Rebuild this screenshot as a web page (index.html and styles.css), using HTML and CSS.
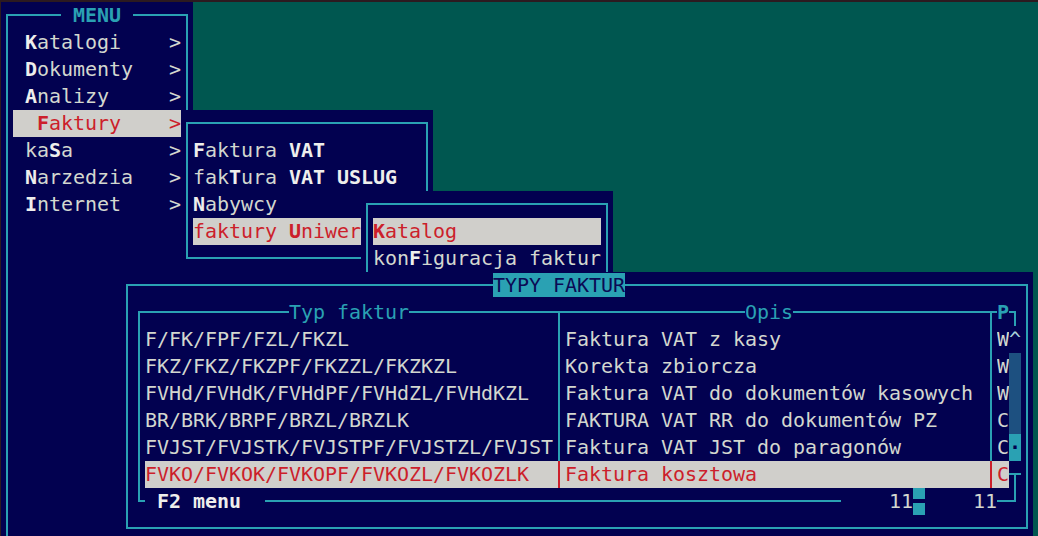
FILE: index.html
```html
<!DOCTYPE html>
<html lang="pl">
<head>
    <meta charset="UTF-8">
    <meta name="viewport" content="width=device-width, initial-scale=1.0">
    <title>Typy faktur</title>
    <link rel="stylesheet" href="styles.css">
</head>
<body>

    <div class="screen">

        <!-- Main menu -->
        <div class="win menu">
            <div class="frame"></div>
            <div class="row caption"><span class="mask title"> MENU </span></div>
            <div class="row item"><span><b>K</b>atalogi</span><span>&gt;</span></div>
            <div class="row item"><span><b>D</b>okumenty</span><span>&gt;</span></div>
            <div class="row item"><span><b>A</b>nalizy</span><span>&gt;</span></div>
            <div class="row item sel"><span><b>F</b>aktury</span><span>&gt;</span></div>
            <div class="row item"><span>ka<b>S</b>a</span><span>&gt;</span></div>
            <div class="row item"><span><b>N</b>arzedzia</span><span>&gt;</span></div>
            <div class="row item"><span><b>I</b>nternet</span><span>&gt;</span></div>
        </div>

        <!-- Faktury submenu -->
        <div class="win sub">
            <div class="frame"></div>
            <div class="row"></div>
            <div class="row item"><b>F</b>aktura <b>VAT</b></div>
            <div class="row item">fak<b>T</b>ura <b>VAT USLUG</b></div>
            <div class="row item"><b>N</b>abywcy</div>
            <div class="row item sel">faktury <b>U</b>niwer</div>
        </div>

        <!-- faktury Uniwersalne submenu -->
        <div class="win cat">
            <div class="frame"></div>
            <div class="row"></div>
            <div class="row item sel"><b>K</b>atalog</div>
            <div class="row item">kon<b>F</b>iguracja faktur</div>
        </div>

        <!-- TYPY FAKTUR window -->
        <div class="win types">
            <div class="frame"></div>
            <div class="frame inner"></div>
            <div class="row caption wide"><span class="badge">TYPY FAKTUR</span></div>

            <div class="row grid head">
                <span class="hcell first"><span class="mask">Typ faktur</span></span>
                <span class="sep top"></span>
                <span class="hcell second"><span class="mask">Opis</span></span>
                <span class="sep top"></span>
                <span class="mask strong">P</span>
                <span></span>
            </div>

            <div class="row grid">
                <span>F/FK/FPF/FZL/FKZL</span><span class="sep"></span>
                <span>Faktura VAT z kasy</span><span class="sep"></span>
                <span>W</span><span class="arrow">^</span>
            </div>
            <div class="row grid">
                <span>FKZ/FKZ/FKZPF/FKZZL/FKZKZL</span><span class="sep"></span>
                <span>Korekta zbiorcza</span><span class="sep"></span>
                <span>W</span><span class="track"></span>
            </div>
            <div class="row grid">
                <span>FVHd/FVHdK/FVHdPF/FVHdZL/FVHdKZL</span><span class="sep"></span>
                <span>Faktura VAT do dokumentów kasowych</span><span class="sep"></span>
                <span>W</span><span class="track"></span>
            </div>
            <div class="row grid">
                <span>BR/BRK/BRPF/BRZL/BRZLK</span><span class="sep"></span>
                <span>FAKTURA VAT RR do dokumentów PZ</span><span class="sep"></span>
                <span>C</span><span class="track"></span>
            </div>
            <div class="row grid">
                <span>FVJST/FVJSTK/FVJSTPF/FVJSTZL/FVJST</span><span class="sep"></span>
                <span>Faktura VAT JST do paragonów</span><span class="sep"></span>
                <span>C</span><span class="thumb">·</span>
            </div>
            <div class="row grid sel">
                <span>FVKO/FVKOK/FVKOPF/FVKOZL/FVKOZLK</span><span class="sep"></span>
                <span>Faktura kosztowa</span><span class="sep"></span>
                <span>C</span><span class="tee"></span>
            </div>

            <div class="row status">
                <span class="mask keys"> <b>F2 menu</b>  </span>
                <span class="line"></span>
                <span class="mask counts">    11<span class="knob"></span>    11</span>
            </div>
        </div>

    </div>

</body>
</html>
```

FILE: styles.css
```css
/* Terminal screen */
body {
    margin: 0;
    padding: 2px 0 0 1px;
    background: #2c1a20;
    font-family: "DejaVu Sans Mono", monospace;
    font-size: 20px;
    letter-spacing: -0.04px;
    color: #d3d7cf;
    overflow: hidden;
}

.screen {
    position: relative;
    width: 1037px;
    height: 534px;
    overflow: hidden;
    background: #005750;
}

b {
    font-weight: bold;
    color: #eeeeec;
}

/* Windows */
.win {
    position: absolute;
    background: #020150;
}

.menu  { left: 0;     top: 0;     width: 192px; height: 567px; }
.sub   { left: 180px; top: 108px; width: 252px; height: 162px; }
.cat   { left: 360px; top: 189px; width: 252px; height: 108px; }
.types { left: 120px; top: 270px; width: 912px; height: 270px; }

.frame {
    position: absolute;
    left: 5px;
    right: 5px;
    top: 12px;
    bottom: 13px;
    border: 2px solid #2aa1b3;
}

.types .inner {
    left: 17px;
    right: 17px;
    top: 39px;
    bottom: 40px;
}

/* Text rows, one terminal line each */
.row {
    position: relative;
    height: 27px;
    line-height: 27px;
    white-space: pre;
}

.mask {
    background: #020150;
}

.caption {
    padding-left: 60px;
}

.caption.wide {
    padding-left: 372px;
}

.title {
    color: #2aa1b3;
    font-weight: bold;
}

.badge {
    background: #2aa1b3;
    color: #0b0a55;
}

/* Menu items */
.item {
    margin: 0 12px;
}

.menu .item {
    display: flex;
    justify-content: space-between;
    padding-left: 12px;
}

.menu .item.sel {
    padding-left: 24px;
}

.item.sel {
    background: #d0cfcb;
    color: #cc1f2b;
}

.item.sel b {
    color: #cc1f2b;
}

/* Table */
.grid {
    display: grid;
    grid-template-columns: 408px 12px 420px 12px 12px 12px;
    margin-left: 24px;
}

.grid > span {
    overflow: hidden;
}

.sep {
    background: linear-gradient(#2aa1b3, #2aa1b3) 5px 0 / 2px 100% no-repeat;
}

.sep.top {
    background: linear-gradient(#2aa1b3, #2aa1b3) 5px 12px / 2px 15px no-repeat;
}

.head {
    color: #2aa1b3;
}

.hcell.first {
    padding-left: 144px;
}

.hcell.second {
    padding-left: 180px;
}

.strong {
    font-weight: bold;
}

.grid.sel > span:not(:last-child) {
    background-color: #d0cfcb;
    color: #cc1f2b;
}

.grid.sel > .sep {
    background-image: linear-gradient(#cc1f2b, #cc1f2b);
    background-position: 5px 0;
    background-size: 2px 100%;
    background-repeat: no-repeat;
}

/* Scrollbar */
.arrow {
    background: #020150;
    color: #a9d4dc;
}

.track {
    background: #1d5080;
}

.thumb {
    background: #2aa1b3;
    color: #020150;
    font-weight: bold;
    text-align: center;
}

.tee {
    background:
        linear-gradient(#2aa1b3, #2aa1b3) 0 12px / 100% 2px no-repeat,
        linear-gradient(#2aa1b3, #2aa1b3) 5px 12px / 2px 15px no-repeat,
        #020150;
}

/* Status line */
.status {
    display: flex;
    margin-left: 24px;
}

.keys {
    width: 120px;
}

.line {
    width: 576px;
}

.counts {
    width: 156px;
}

.knob {
    display: inline-block;
    width: 12px;
    height: 27px;
    vertical-align: top;
    background: linear-gradient(#2aa1b3 11px, #020150 11px, #020150 15px, #2aa1b3 15px);
}
```
